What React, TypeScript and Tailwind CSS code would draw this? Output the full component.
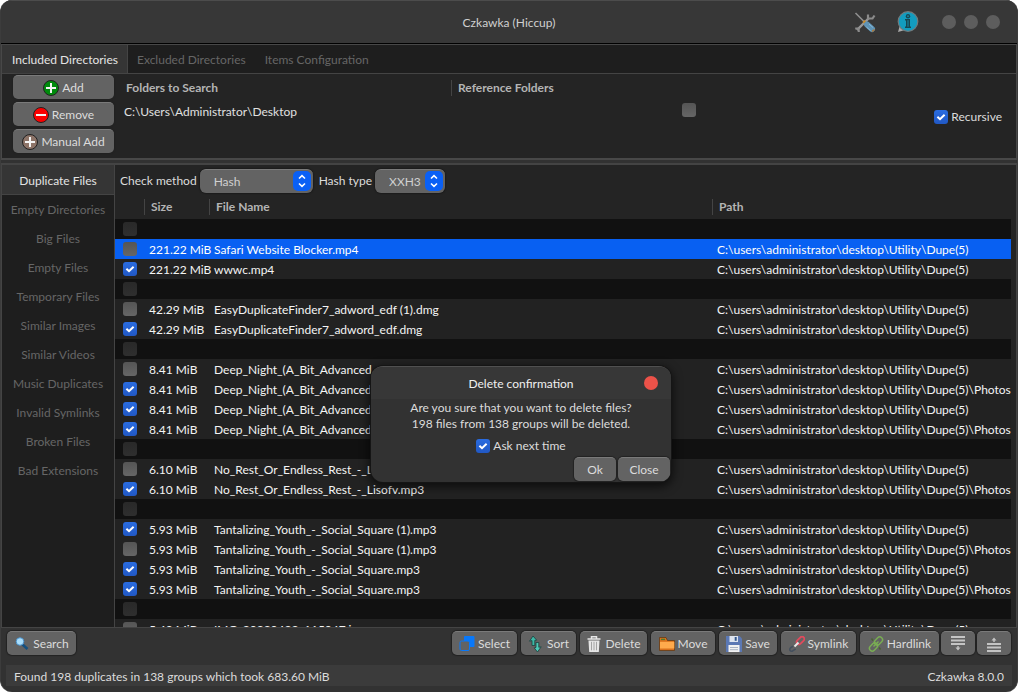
import { ReactNode } from 'react';

type Row = { size: string; name: string; path: string; checked?: boolean; selected?: boolean } | null;

const BASE = 'C:\\users\\administrator\\desktop\\Utility\\Dupe(5)';
const PHOTOS = BASE + '\\Photos Library';
const DEEP = 'Deep_Night_(A_Bit_Advanced_Music_featuring_dark_and_deep_night_mixing) (1).mp3';

// null marks the dark separator between two groups of duplicates
const rows: Row[] = [
  null,
  { size: '221.22 MiB', name: 'Safari Website Blocker.mp4', path: BASE, selected: true },
  { size: '221.22 MiB', name: 'wwwc.mp4', path: BASE, checked: true },
  null,
  { size: '42.29 MiB', name: 'EasyDuplicateFinder7_adword_edf (1).dmg', path: BASE },
  { size: '42.29 MiB', name: 'EasyDuplicateFinder7_adword_edf.dmg', path: BASE, checked: true },
  null,
  { size: '8.41 MiB', name: DEEP, path: BASE },
  { size: '8.41 MiB', name: 'Deep_Night_(A_Bit_Advanced_Music.mp3', path: PHOTOS, checked: true },
  { size: '8.41 MiB', name: 'Deep_Night_(A_Bit_Advanced_Music.mp3', path: BASE, checked: true },
  { size: '8.41 MiB', name: 'Deep_Night_(A_Bit_Advanced_Music.mp3', path: PHOTOS, checked: true },
  null,
  { size: '6.10 MiB', name: 'No_Rest_Or_Endless_Rest_-_Lisofv.mp3', path: BASE },
  { size: '6.10 MiB', name: 'No_Rest_Or_Endless_Rest_-_Lisofv.mp3', path: PHOTOS, checked: true },
  null,
  { size: '5.93 MiB', name: 'Tantalizing_Youth_-_Social_Square (1).mp3', path: BASE, checked: true },
  { size: '5.93 MiB', name: 'Tantalizing_Youth_-_Social_Square (1).mp3', path: PHOTOS },
  { size: '5.93 MiB', name: 'Tantalizing_Youth_-_Social_Square.mp3', path: BASE, checked: true },
  { size: '5.93 MiB', name: 'Tantalizing_Youth_-_Social_Square.mp3', path: PHOTOS, checked: true },
  null,
  { size: '5.49 MiB', name: 'IMG_20220423_115047.jpg', path: BASE },
];

const tools = [
  'Duplicate Files',
  'Empty Directories',
  'Big Files',
  'Empty Files',
  'Temporary Files',
  'Similar Images',
  'Similar Videos',
  'Music Duplicates',
  'Invalid Symlinks',
  'Broken Files',
  'Bad Extensions',
];

const Check = ({ checked, label, dim }: { checked?: boolean; label?: string; dim?: boolean }) => (
  <span className={`relative inline-flex size-3.5 shrink-0 ${dim ? 'opacity-35' : ''}`}>
    <input
      type="checkbox"
      defaultChecked={checked}
      disabled={dim}
      aria-label={label}
      className="peer size-3.5 appearance-none rounded-[3px] bg-linear-to-b from-[#555] to-[#666] checked:from-[#2a6ce0] checked:to-[#2158c4]"
    />
    <svg viewBox="0 0 14 14" className="pointer-events-none absolute inset-0 hidden peer-checked:block" fill="none" stroke="#fff" strokeWidth="2">
      <path d="M3.4 6.8 6 9.2 10.6 4.8" />
    </svg>
  </span>
);

const PushButton = ({ icon, children, className = '', label }: { icon?: ReactNode; children?: ReactNode; className?: string; label?: string }) => (
  <button
    type="button"
    aria-label={label}
    className={`flex h-6 shrink-0 items-center justify-center gap-[3px] rounded-[5px] border-t border-[#7a7a7a] bg-[#636363] text-[#dcdcdc] shadow-[0_0_1px_1px_#222] ${className}`}
  >
    {icon}
    {children}
  </button>
);

const CircleIcon = ({ fill, minus }: { fill: string; minus?: boolean }) => (
  <svg viewBox="0 0 16 16" className="size-4">
    <circle cx="8" cy="8" r="7.5" fill={fill} stroke="#222" strokeWidth="1" />
    <path d={minus ? 'M3 8H13' : 'M3 8H13M8 3V13'} stroke="#f4f4f4" strokeWidth="2" />
  </svg>
);

const Combo = ({ id, value, className }: { id: string; value: string; className: string }) => (
  <span className={`relative inline-flex h-6 ${className}`}>
    <select id={id} className="h-6 w-full appearance-none rounded-md border-t border-[#7a7a7a] bg-[#636363] pl-3.5 text-[#d0d0d0] shadow-[0_0_1px_1px_#1c1c1c]">
      <option>{value}</option>
    </select>
    <svg viewBox="0 0 18 20" className="pointer-events-none absolute top-0.5 right-0.5 h-5 w-[18px]" fill="none" stroke="#fff" strokeWidth="1.6">
      <rect width="18" height="20" rx="5" fill="#0a60f5" stroke="none" />
      <path d="M6 7.5 9 4.7 12 7.5M6 12.5 9 15.3 12 12.5" />
    </svg>
  </span>
);

const ToolsIcon = () => (
  <svg viewBox="0 0 22 22" className="size-[22px]" fill="none">
    <path d="M3 19 15 7" stroke="#999" strokeWidth="2.4" />
    <path d="M14 3.5V7.5H18.5L20.5 4.5M1.2 17.5 4.5 17.5 4.8 21" stroke="#8b8b8b" strokeWidth="2.2" />
    <path d="M1.5 2 10 10.5" stroke="#8f8f8f" strokeWidth="1.6" />
    <path d="m9.5 10 2.5 2.5" stroke="#c98a2a" strokeWidth="3" />
    <path d="m13 13.5 5 4.5" stroke="#5f93b5" strokeWidth="6" strokeLinecap="round" />
    <path d="m12.5 16 4 3.5M15 13l4 3.5" stroke="#85b8d8" strokeWidth="1" />
    <path d="m18 20.5 2.5-2" stroke="#b5762c" strokeWidth="1.3" />
  </svg>
);

const InfoIcon = () => (
  <svg viewBox="0 0 22 22" className="size-[22px]">
    <path d="M1 21 3 14 8 19Z" fill="#aaa" />
    <circle cx="11" cy="10.5" r="9.8" fill="#129cbf" stroke="#71797b" strokeWidth="1.2" />
    <circle cx="11" cy="5.2" r="2.2" fill="#174651" />
    <circle cx="11" cy="5.2" r=".9" fill="#168aa6" />
    <path d="M9 8H13V15.5H14V17H8V15.5H9V9.5H8V8Z" fill="#174651" />
    <path d="M11 9.2V15.8" stroke="#168aa6" strokeWidth="1" />
  </svg>
);

const SearchIcon = () => (
  <svg viewBox="0 0 16 16" className="size-4" fill="none">
    <path d="m8.5 8.5 5 4.5" stroke="#15507f" strokeWidth="2.6" />
    <circle cx="6" cy="5.5" r="3.8" fill="#a9defc" stroke="#4b91c9" strokeWidth="1" />
  </svg>
);

const SelectIcon = () => (
  <svg viewBox="0 0 16 16" className="size-4">
    <rect x="5" y="0" width="10.5" height="11" rx="1" fill="#0878fa" />
    <rect x="1" y="5" width="9.5" height="9.5" rx="1.5" fill="#626365" stroke="#0878fa" />
  </svg>
);

const SortIcon = () => (
  <svg viewBox="0 0 16 16" className="size-4" stroke="#1a3f3c" strokeWidth=".8">
    <path d="M5 0 8.7 4.2 6.8 4.4V9.5H4V4.6L1.5 5.2Z" fill="#3db9a7" />
    <path d="M9.5 16 6.2 11.8 8 11.4V6.5h2.8v4.8l2.4-.5Z" fill="#4fc9b7" />
  </svg>
);

const TrashIcon = () => (
  <svg viewBox="0 0 16 16" className="size-4" fill="none" stroke="#e6e6e6">
    <path d="M1.5 3H14.5M5.5 2.5V.7H10.5V2.5" strokeWidth="1.5" />
    <path d="M2.5 4.5H13.5L12.8 16H3.2Z" fill="#e6e6e6" stroke="none" />
    <path d="M5.5 5.8V14.3M8 5.8V14.3M10.5 5.8V14.3" stroke="#a4a4a4" />
  </svg>
);

const FolderIcon = () => (
  <svg viewBox="0 0 16 16" className="size-4" stroke="#5d3510" strokeWidth=".7">
    <path d="M.5 14.5V1.5H7L8.5 4.5H15.5V14.5Z" fill="#d9701b" />
    <path d="M1 5.8H15.3V12.5H1Z" fill="#ffaa4c" stroke="none" />
    <path d="M2 3.4H6" stroke="#4f7a2e" strokeWidth="1.4" />
  </svg>
);

const SaveIcon = () => (
  <svg viewBox="0 0 16 16" className="size-4">
    <path d="M0 0H13.5L16 2.5V16H0Z" fill="#5b78b4" />
    <path d="M3.5 0H12V6H3.5Z" fill="#dde4ef" />
    <path d="M8.7 1h2v3.8h-2Z" fill="#34588c" />
    <path d="M2.5 9H13.5V16H2.5Z" fill="#f2f2f2" />
    <path d="M4 11.5H12M4 13.7H12" stroke="#a9b3c3" />
  </svg>
);

const SymlinkIcon = () => (
  <svg viewBox="0 0 16 16" className="size-4" fill="none">
    <rect x="7" y="2.2" width="9" height="4.6" rx="2.3" transform="rotate(-45 11.5 4.5)" stroke="#e04a5c" strokeWidth="1.8" />
    <path d="M4 10.2 1.4 12a1.8 1.8 0 0 0 2.3 2.8l3-2" stroke="#44505e" strokeWidth="1.6" />
    <path d="m5.5 10.5 4-4" stroke="#e8e8e8" strokeWidth="2" />
  </svg>
);

const HardlinkIcon = () => (
  <svg viewBox="0 0 16 16" className="size-4" fill="none" stroke="#79ad53" strokeWidth="1.5">
    <rect x="6" y="2.2" width="9" height="5.6" rx="2.8" transform="rotate(-45 10.5 5)" />
    <rect x="1" y="8.2" width="9" height="5.6" rx="2.8" transform="rotate(-45 5.5 11)" />
    <path d="m5.5 10.5 5-5" />
    <path d="m3.5 2.5 1.5 2M12.5 13.5l-1.5-2" stroke="#48642f" />
  </svg>
);

const PanelIcon = ({ up }: { up?: boolean }) => (
  <svg viewBox="0 0 16 16" className="size-4 text-[#c4c4c4]" fill="currentColor">
    {up ? (
      <path d="M1 7H15V9H1ZM1 10.5H15V12.5H1ZM1 14H15V16H1ZM7.3 6V4.5H5.5L8 1.5 10.5 4.5H8.7V6Z" />
    ) : (
      <path d="M1 0H15V2H1ZM1 3.5H15V5.5H1ZM1 7H15V9H1ZM7.3 10V11.5H5.5L8 14.5 10.5 11.5H8.7V10Z" />
    )}
  </svg>
);

const TitleBar = () => (
  <header className="grid h-11 shrink-0 grid-cols-[1fr_auto_1fr] items-center border-t border-b border-t-[#4c4c4c] border-b-black bg-[#373737]">
    <h1 className="col-start-2 pt-0.5 text-[#d0d0d0]">Czkawka (Hiccup)</h1>
    <div className="flex items-center justify-end pr-[17px]">
      <button type="button" aria-label="Settings" className="mr-[21px]"><ToolsIcon /></button>
      <button type="button" aria-label="About" className="mr-[23px]"><InfoIcon /></button>
      <div className="flex gap-2">
        <button type="button" aria-label="Minimize" className="size-3.5 rounded-full bg-[#5d5d5d]" />
        <button type="button" aria-label="Maximize" className="size-3.5 rounded-full bg-[#5d5d5d]" />
        <button type="button" aria-label="Close window" className="size-3.5 rounded-full bg-[#5d5d5d]" />
      </div>
    </div>
  </header>
);

const DirectoriesPanel = () => (
  <section className="shrink-0 border border-b-2 border-[#484848] bg-[#242424]">
    <nav className="flex h-[29px] border-b border-[#444] bg-[#1e1e1e] text-[#666]">
      <button type="button" className="h-7 border-r border-[#444] bg-[#353535] pt-0.5 pr-[9px] pl-2.5 text-[#e4e4e4]">Included Directories</button>
      <button type="button" className="px-[9px] pt-0.5">Excluded Directories</button>
      <button type="button" className="px-2.5 pt-0.5">Items Configuration</button>
    </nav>
    <div className="flex h-[84px]">
      <div className="ml-[11px] flex w-[101px] flex-col gap-[3px] pt-px">
        <PushButton icon={<CircleIcon fill="#008a0c" />}>Add</PushButton>
        <PushButton icon={<CircleIcon fill="#fa0000" minus />}>Remove</PushButton>
        <PushButton icon={<CircleIcon fill="#8d7468" />}>Manual Add</PushButton>
      </div>
      <table className="mr-2 ml-2 h-12 flex-1 table-fixed text-left">
        <thead>
          <tr className="h-[27px] text-[#b4b4b4]">
            <th className="w-[329px] p-0 pl-1 font-bold">Folders to Search</th>
            <th className="p-0 font-bold"><span className="block border-l border-[#444] pl-1.5">Reference Folders</span></th>
          </tr>
        </thead>
        <tbody>
          <tr className="h-5 text-[#e0e0e0]">
            <td className="p-0 pl-0.5">C:\Users\Administrator\Desktop</td>
            <td className="p-0 text-center"><Check label="Use as reference folder" /></td>
          </tr>
        </tbody>
      </table>
      <label className="mr-3.5 flex items-center gap-[3px] self-center pt-0.5 text-[#dcdcdc]">
        <Check checked />
        Recursive
      </label>
    </div>
  </section>
);

const ToolTabs = () => (
  <nav className="flex w-[113px] shrink-0 flex-col border-r border-[#444] bg-[#1e1e1e]">
    {tools.map((tool, i) => (
      <button
        key={tool}
        type="button"
        className={`shrink-0 ${i === 0 ? 'h-[30px] border-b border-[#444] bg-[#353535] pt-0.5 text-[#e4e4e4]' : 'h-[29px] text-[#666]'}`}
      >
        {tool}
      </button>
    ))}
  </nav>
);

const ResultsTable = () => (
  <div className="min-h-0 flex-1 overflow-hidden pr-[5px]">
    <table className="w-full table-fixed text-left">
      <thead>
        <tr className="h-[22px] text-[#b4b4b4]">
          <th className="w-[29px] p-0"></th>
          <th className="w-[65px] p-0 pb-0.5 font-bold"><span className="block h-4 border-l border-[#444] pl-1.5">Size</span></th>
          <th className="w-[503px] p-0 pb-0.5 font-bold"><span className="block h-4 border-l border-[#444] pl-1.5">File Name</span></th>
          <th className="p-0 pb-0.5 font-bold"><span className="block h-4 border-l border-[#444] pl-1.5">Path</span></th>
        </tr>
      </thead>
      <tbody>
        {rows.map((row, i) => (
          <tr key={i} className={`h-5 ${!row ? 'bg-[#111]' : row.selected ? 'bg-[#0860f2] text-white' : 'bg-[#222] text-[#f4f4f4]'}`}>
            <td className="p-0">
              <span className="flex pl-2"><Check checked={row?.checked} dim={!row} label={row ? row.name : 'Group'} /></span>
            </td>
            <td className="p-0 pt-0.5 pl-[5px] whitespace-nowrap">{row?.size}</td>
            <td className="overflow-hidden p-0 pt-0.5 pl-[5px] whitespace-nowrap">{row?.name}</td>
            <td className="overflow-hidden p-0 pt-0.5 pl-[5px] whitespace-nowrap">{row?.path}</td>
          </tr>
        ))}
      </tbody>
    </table>
  </div>
);

const ActionBar = () => (
  <div className="flex h-[37px] shrink-0 items-start justify-between px-1.5 pt-[3px]">
    <PushButton className="w-[69px]" icon={<SearchIcon />}>Search</PushButton>
    <div className="flex gap-1">
      <PushButton className="w-[65px]" icon={<SelectIcon />}>Select</PushButton>
      <PushButton className="w-[55px]" icon={<SortIcon />}>Sort</PushButton>
      <PushButton className="w-[67px]" icon={<TrashIcon />}>Delete</PushButton>
      <PushButton className="w-16" icon={<FolderIcon />}>Move</PushButton>
      <PushButton className="w-[58px]" icon={<SaveIcon />}>Save</PushButton>
      <PushButton className="w-[75px]" icon={<SymlinkIcon />}>Symlink</PushButton>
      <PushButton className="w-[79px]" icon={<HardlinkIcon />}>Hardlink</PushButton>
      <div className="-ml-0.5 flex gap-0.5">
        <PushButton className="w-[34px]" icon={<PanelIcon />} label="Toggle lower panel" />
        <PushButton className="w-[34px]" icon={<PanelIcon up />} label="Toggle upper panel" />
      </div>
    </div>
  </div>
);

const DeleteDialog = () => (
  <div
    role="dialog"
    aria-labelledby="dialog-title"
    className="absolute top-[366px] left-1/2 flex w-[300px] -translate-x-[138px] flex-col overflow-hidden rounded-xl border-t border-[#505050] bg-[#323232] text-[#dcdcdc] shadow-[0_0_0_1px_#151515,0_3px_10px_2px_rgba(0,0,0,0.6)]"
  >
    <div className="grid h-8 grid-cols-[1fr_auto_1fr] items-center bg-[#373737]">
      <h2 id="dialog-title" className="col-start-2 pt-0.5 text-[#f0f0f0]">Delete confirmation</h2>
      <button type="button" aria-label="Close dialog" className="mr-[13px] size-3.5 justify-self-end rounded-full bg-[#ec5249]" />
    </div>
    <p className="pt-px text-center leading-4">
      Are you sure that you want to delete files?
      <br />
      198 files from 138 groups will be deleted.
    </p>
    <label className="mt-1.5 flex items-center justify-center gap-[3px]">
      <Check checked />
      Ask next time
    </label>
    <div className="flex justify-end gap-0.5 p-px pt-[3px]">
      <PushButton className="w-[42px]">Ok</PushButton>
      <PushButton className="w-[52px]">Close</PushButton>
    </div>
  </div>
);

export default function App() {
  return (
    <div className="h-screen bg-white font-['Lato','Open_Sans',sans-serif] text-[12px] leading-4">
      <div className="relative flex h-full flex-col overflow-hidden rounded-xl border-x border-[#3c3c3c] bg-[#323232]">
        <TitleBar />
        <DirectoriesPanel />
        <main className="mt-[3px] flex min-h-0 flex-1 border border-t-2 border-[#444] bg-[#242424]">
          <ToolTabs />
          <div className="flex min-w-0 flex-1 flex-col">
            <div className="flex h-8 shrink-0 items-center pl-[5px] text-[#dcdcdc]">
              <label htmlFor="check-method">Check method</label>
              <Combo id="check-method" value="Hash" className="ml-[3px] w-[113px]" />
              <label htmlFor="hash-type" className="ml-1.5">Hash type</label>
              <Combo id="hash-type" value="XXH3" className="ml-[3px] w-[70px]" />
            </div>
            <ResultsTable />
          </div>
        </main>
        <ActionBar />
        <footer className="mx-[5px] mb-1.5 flex h-[21px] shrink-0 items-center justify-between bg-[#3b3b3b] px-2 pt-0.5 text-[#dcdcdc]">
          <span>Found 198 duplicates in 138 groups which took 683.60 MiB</span>
          <span>Czkawka 8.0.0</span>
        </footer>
        <DeleteDialog />
      </div>
    </div>
  );
}
